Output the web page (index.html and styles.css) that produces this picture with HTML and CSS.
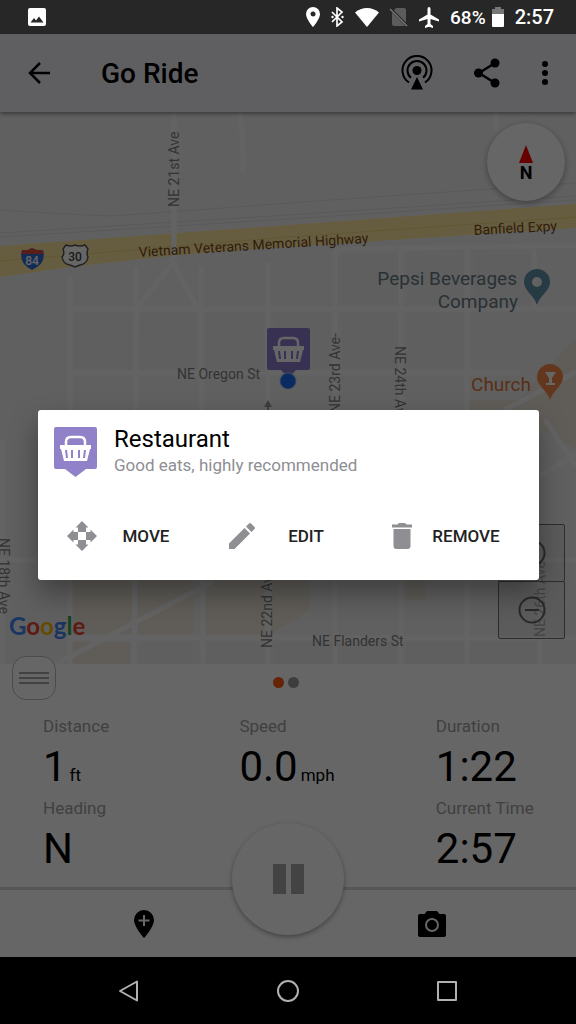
FILE: index.html
```html
<!DOCTYPE html>
<html lang="en">
<head>
    <meta charset="UTF-8">
    <meta name="viewport" content="width=device-width, initial-scale=1.0">
    <title>Go Ride</title>
    <link rel="stylesheet" href="styles.css">
</head>
<body>
    <header class="status-bar">
        <svg width="18" height="18" viewBox="0 0 18 18"><rect width="18" height="18" rx="2" fill="#fff"/><path d="M2.500 14.500l3.500-4.500 2 2.500 3-4 4.500 6z" fill="#272727"/></svg>
        <div class="status-icons">
            <svg width="14" height="20" viewBox="0 0 14 20"><path fill="#fff" fill-rule="evenodd" d="M7 0a7 7 0 0 0-7 7c0 5 7 13 7 13s7-8 7-13a7 7 0 0 0-7-7zm0 4.500a2.500 2.500 0 1 1 0 5 2.500 2.500 0 0 1 0-5z"/></svg>
            <svg width="13" height="20" viewBox="0 0 13 20"><path d="M1 5l10 10-5 4V1l5 4L1 15" fill="none" stroke="#fff" stroke-width="1.700"/><circle cx="1.500" cy="10" r="1.200" fill="#fff"/><circle cx="11.500" cy="10" r="1.200" fill="#fff"/></svg>
            <svg width="24" height="19" viewBox="0 0 24 19"><path fill="#fff" d="M0 4.500C3.500 1.500 7.500 0 12 0s8.500 1.500 12 4.500L12 19z"/></svg>
            <svg width="18" height="20" viewBox="0 0 18 20"><path fill="#5c5c5c" d="M6 1h8q2 0 2 2v14q0 2-2 2H4q-2 0-2-2V5z"/><path d="M0 1.500l18 18" stroke="#272727" stroke-width="3"/><path d="M0 2l17 17" stroke="#777" stroke-width="1.500"/></svg>
            <svg width="20" height="21" viewBox="0 0 20 21"><path fill="#fff" d="M10 0q1.500 0 1.500 2v5.500l8.500 5v2l-8.500-2.500v5l2.500 2V21l-4-1.200L6 21v-2l2.500-2v-5L0 14.500v-2l8.500-5V2Q8.500 0 10 0z"/></svg>
            <span class="battery-level">68%</span>
            <svg width="12" height="20" viewBox="0 0 12 20"><path fill="#777" d="M3 0h6v2h3v6H0V2h3z"/><path fill="#fff" d="M0 7h12v12q0 1-1 1H1q-1 0-1-1z"/></svg>
            <span class="clock">2:57</span>
        </div>
    </header>

    <main class="app">
        <div class="app-bar">
            <button class="icon-btn" aria-label="Back">
                <svg width="24" height="24" viewBox="0 0 24 24"><path d="M24 12H4M14 2L4 12l10 10" fill="none" stroke="#000" stroke-width="2.500"/></svg>
            </button>
            <h1>Go Ride</h1>
            <button class="icon-btn" aria-label="Live tracking">
                <svg width="32" height="36" viewBox="0 0 32 36"><g fill="none" stroke="#000" stroke-width="2"><path d="M8 27.500a14.500 14.500 0 1 1 16 0"/><path d="M10 22.800a9.500 9.500 0 1 1 12 0"/></g><circle cx="16" cy="15.500" r="4.500"/><path d="M16 22l6 12.500H10z"/></svg>
            </button>
            <button class="icon-btn" aria-label="Share">
                <svg width="28" height="30" viewBox="0 0 28 30"><path d="M22 5L6 15l16 10" fill="none" stroke="#000" stroke-width="2.500"/><circle cx="22" cy="5" r="4.500"/><circle cx="5.500" cy="15" r="4.500"/><circle cx="22" cy="25" r="4.500"/></svg>
            </button>
            <button class="icon-btn" aria-label="More options">
                <svg width="8" height="26" viewBox="0 0 8 26"><circle cx="4" cy="4" r="3"/><circle cx="4" cy="13" r="3"/><circle cx="4" cy="22" r="3"/></svg>
            </button>
        </div>

        <section class="map">
            <svg class="map-canvas" viewBox="0 112 576 552" preserveAspectRatio="xMidYMid slice">
                <!-- land -->
                <rect y="112" width="576" height="552" fill="#f1f1f1"/>
                <g fill="#eeeeee">
                    <path d="M74 313h59v56H74zM140 313h57v56h-57zM206 313h58v56h-58zM274 313h56v56h-56zM342 255h56v50h-56zM342 313h56v56h-56zM408 255h56v50h-56zM408 313h56v56h-56zM474 255h56v50h-56z"/>
                    <path d="M140 642h52v22h-52zM200 642h64v22h-64zM274 642h123v22H274zM405 642h132v22H405z"/>
                </g>
                <g fill="#f1e9dc">
                    <path d="M568 345l8-5v110l-66-40zM72 642h58v22H72zM72 570h60v64H72zM138 570h55v64h-55zM200 570h64v64h-64zM272 570h38v40l-38 24zM405 570h20v30h-20zM470 400h60v40h-60z"/>
                </g>
                <!-- railways -->
                <g fill="none" stroke="#dedede" stroke-width="1">
                    <path d="M0 210q60 4 110 6 90-6 178-13l288-20M0 233l288-18 288-19M0 237l288-18 288-19"/>
                </g>
                <!-- streets -->
                <g fill="none" stroke="#f8f8f8" stroke-width="5">
                    <path d="M240 112q4 30 3 60M496 112v20M70 275v389M136 266v43l-2 355M201 266l2 400M268 262v402M335 250v414M401 250v414M467 250v414M534 250v60M540 560v104M2 440v224"/>
                    <path d="M72 309h504M70 373h450M0 560h576M70 638h506M335 250q60-3 241-4M54 665l160-84M505 410l71-38M545 420l31 46M540 475l36-20"/>
                </g>
                <!-- highway -->
                <path d="M0 246q140-10 288-21l288-21v24l-288 19q-150 9-288 30z" fill="#ffe9a0"/>
                <path d="M0 261l288-24 288-20" stroke="#f3d77e" fill="none"/>
                <path d="M174 112v150l-36 44M170 258l28 50" fill="none" stroke="#f8f8f8" stroke-width="5"/>
                <!-- street names -->
                <g class="street">
                    <text transform="translate(179 207) rotate(-90)">NE 21st Ave</text>
                    <text x="177" y="379">NE Oregon St</text>
                    <text transform="translate(340 413) rotate(-90)">NE 23rd Ave-</text>
                    <text transform="translate(395 346) rotate(90)">NE 24th Ave</text>
                    <text transform="translate(-1 538) rotate(90)">NE 18th Ave</text>
                    <text transform="translate(272 648) rotate(-90)">NE 22nd Ave</text>
                    <text class="faint" transform="translate(545 637) rotate(-90)">NE 26th Ave</text>
                    <text x="312" y="646">NE Flanders St</text>
                </g>
                <g class="road-name">
                    <text transform="translate(139 257) rotate(-3.500)">Vietnam Veterans Memorial Highway</text>
                    <text transform="translate(474 235) rotate(-3)">Banfield Expy</text>
                </g>
                <!-- route shields -->
                <path d="M22 250q6 1 10-2 5 3 11 2 4 13-11 20-14-7-10-20z" fill="#2f6fd6"/>
                <path d="M22 250q6 1 10-2 5 3 11 2v4H22z" fill="#e04a3c"/>
                <text class="shield" x="32" y="265" fill="#fff">84</text>
                <path d="M66 245q5 2 9 0 5 2 10 0l3 4q-2 5 0 8-1 7-8 8l-5 2-5-2q-7-1-8-8 3-3 1-8z" fill="#fff" stroke="#555" stroke-width="1.500"/>
                <text class="shield" x="75" y="261" fill="#444">30</text>
                <!-- places -->
                <g class="place" text-anchor="end">
                    <text x="517" y="285">Pepsi Beverages</text>
                    <text x="518" y="308">Company</text>
                    <text class="church" x="531" y="391">Church</text>
                </g>
                <path fill="#5f93a8" fill-rule="evenodd" d="M537 269a13 13 0 0 0-13 13c0 9 10 13 13 23 3-10 13-14 13-23a13 13 0 0 0-13-13zm0 8a5 5 0 1 1 0 10 5 5 0 0 1 0-10z"/>
                <path fill="#f58a4b" d="M550 364a13 13 0 0 0-13 13c0 9 10 13 13 23 3-10 13-14 13-23a13 13 0 0 0-13-13z"/>
                <path fill="#fff" d="M545 372h11l-4 6v5h3v2h-9v-2h3v-5z"/>
                <path d="M268 400l4 7h-3v6h-2v-6h-3z" fill="#999"/>
                <!-- saved place and current position -->
                <g transform="translate(267 328)">
                    <path d="M2 0h39q2 0 2 2v38q0 2-2 2H29l-7.500 8L14 42H2q-2 0-2-2V2q0-2 2-2z" fill="#8e7ccb"/>
                    <path d="M12 18v-3q0-5 5-5h9q5 0 5 5v3" fill="none" stroke="#fff" stroke-width="2.500"/>
                    <path fill="#fff" fill-rule="evenodd" d="M6 18h31v4h-1l-3 12H10L7 22H6zM11 23l1 8h2l-1-8zM17 23v8h2v-8zM24 23v8h2v-8zM30 23l-1 8h2l1-8z"/>
                </g>
                <circle cx="288" cy="381" r="8.500" fill="#9dbdf5"/>
                <circle cx="288" cy="381" r="7.500" fill="#1a6cf0"/>
                <text class="google" x="9" y="635"><tspan fill="#4285f4">G</tspan><tspan fill="#ea4335">o</tspan><tspan fill="#fbbc05">o</tspan><tspan fill="#4285f4">g</tspan><tspan fill="#34a853">l</tspan><tspan fill="#ea4335">e</tspan></text>
            </svg>
            <button class="compass" aria-label="Compass">
                <svg width="14" height="18" viewBox="0 0 14 18"><path d="M7 0l7 18H0z" fill="#f00"/></svg>
                <span>N</span>
            </button>
            <div class="zoom-controls">
                <button aria-label="Zoom in"><svg width="28" height="28" viewBox="0 0 28 28"><circle cx="14" cy="14" r="12.500"/><path d="M7 14h14M14 7v14"/></svg></button>
                <button aria-label="Zoom out"><svg width="28" height="28" viewBox="0 0 28 28"><circle cx="14" cy="14" r="12.500"/><path d="M7 14h14"/></svg></button>
            </div>
            <button class="drawer-btn" aria-label="Map options">
                <svg width="30" height="14" viewBox="0 0 30 14"><path d="M0 2h30M0 7h30M0 12h30" stroke="#888" stroke-width="1.500"/></svg>
            </button>
        </section>

        <section class="panel">
            <div class="pager"><span class="dot active"></span><span class="dot"></span></div>
            <dl class="stats">
                <div><dt>Distance</dt><dd>1<small>ft</small></dd></div>
                <div><dt>Speed</dt><dd>0.0<small>mph</small></dd></div>
                <div><dt>Duration</dt><dd>1:22</dd></div>
                <div><dt>Heading</dt><dd>N</dd></div>
                <div class="last"><dt>Current Time</dt><dd>2:57</dd></div>
            </dl>
        </section>

        <div class="toolbar">
            <button class="icon-btn" aria-label="Add place">
                <svg width="20" height="28" viewBox="0 0 20 28"><path d="M10 0A10 10 0 0 0 0 10c0 7 10 18 10 18s10-11 10-18A10 10 0 0 0 10 0z"/><path d="M10 5v11M4.500 10.500h11" stroke="#fff" stroke-width="2"/></svg>
            </button>
            <button class="icon-btn" aria-label="Take photo">
                <svg width="28" height="26" viewBox="0 0 28 26"><path d="M9 0h10l2.500 3H26q2 0 2 2v19q0 2-2 2H2q-2 0-2-2V5q0-2 2-2h4.500z"/><circle cx="14" cy="14" r="6" fill="none" stroke="#fff" stroke-width="2"/></svg>
            </button>
            <button class="pause-btn" aria-label="Pause">
                <svg width="32" height="30" viewBox="0 0 32 30"><path d="M1 0h13v30H1zM19 0h13v30H19z" fill="#a8a8a8"/></svg>
            </button>
        </div>

        <div class="scrim">
            <div class="dialog" role="dialog" aria-labelledby="place-name">
                <div class="dialog-head">
                    <svg width="43" height="50" viewBox="0 0 43 50">
                        <path d="M2 0h39q2 0 2 2v38q0 2-2 2H32l-10.500 8L11 42H2q-2 0-2-2V2q0-2 2-2z" fill="#9181c9"/>
                        <path d="M12 18v-3q0-5 5-5h9q5 0 5 5v3" fill="none" stroke="#fff" stroke-width="2.500"/>
                        <path fill="#fff" fill-rule="evenodd" d="M6 18h31v4h-1l-3 12H10L7 22H6zM11 23l1 8h2l-1-8zM17 23v8h2v-8zM24 23v8h2v-8zM30 23l-1 8h2l1-8z"/>
                    </svg>
                    <div>
                        <h2 id="place-name">Restaurant</h2>
                        <p>Good eats, highly recommended</p>
                    </div>
                </div>
                <div class="dialog-actions">
                    <button>
                        <svg width="32" height="32" viewBox="0 0 32 32"><path d="M16 1l6.500 6.500H20V12h-8V7.500H9.500zM16 31l-6.500-6.500H12V20h8v4.500h2.500zM1 16l6.500-6.500V12H12v8H7.500v2.500zM31 16l-6.500 6.500V20H20v-8h4.500V9.500z"/><path d="M12 12h8v8h-8z" fill="#fff"/></svg>
                        <span>MOVE</span>
                    </button>
                    <button>
                        <svg width="26" height="26" viewBox="0 0 26 26"><path d="M0 20.500L15.500 5l5.500 5.500L5.500 26H0zM17 3.500L20 .5q1-1 2 0L25.500 4q1 1 0 2l-3 3z"/></svg>
                        <span>EDIT</span>
                    </button>
                    <button>
                        <svg width="20" height="26" viewBox="0 0 20 26"><path d="M0 1.500h5.500L7 0h6l1.500 1.500H20v3H0zM1.500 6h17v17q0 3-3 3h-11q-3 0-3-3z"/></svg>
                        <span>REMOVE</span>
                    </button>
                </div>
            </div>
        </div>
    </main>

    <nav class="nav-bar">
        <button class="icon-btn" aria-label="Back"><svg width="22" height="22" viewBox="0 0 22 22"><path d="M19 1.500v19L2 11z"/></svg></button>
        <button class="icon-btn" aria-label="Home"><svg width="22" height="22" viewBox="0 0 22 22"><circle cx="11" cy="11" r="10"/></svg></button>
        <button class="icon-btn" aria-label="Recent apps"><svg width="22" height="22" viewBox="0 0 22 22"><rect x="2" y="2" width="18" height="18"/></svg></button>
    </nav>
</body>
</html>
```

FILE: styles.css
```css
* {
    box-sizing: border-box;
}
body {
    margin: 0;
    min-height: 100vh;
    display: flex;
    flex-direction: column;
    font-family: Roboto, sans-serif;
    background: #000;
    color: #000;
}
h1, h2, p, dl, dd {
    margin: 0;
}
svg {
    display: block;
    flex: none;
}
button {
    font: inherit;
    color: inherit;
    padding: 0;
    border: none;
    background: none;
    cursor: pointer;
}

/* status bar */
.status-bar {
    height: 34px;
    padding: 0 22px 0 28px;
    display: flex;
    align-items: center;
    justify-content: space-between;
    background: #272727;
    color: #fff;
    font-weight: 500;
}
.status-icons {
    display: flex;
    align-items: center;
    gap: 11px;
}
.battery-level {
    font-size: 19px;
    margin-right: -5px;
}
.clock {
    font-size: 20px;
}

/* app */
.app {
    position: relative;
    flex: 1;
    display: flex;
    flex-direction: column;
    background: #fff;
}
.app-bar {
    position: relative;
    z-index: 1;
    height: 78px;
    padding: 0 27px 0 26px;
    display: flex;
    align-items: center;
    background: #eeeef4;
    box-shadow: 0 2px 4px rgba(0,0,0,0.4);
}
.app-bar h1 {
    flex: 1;
    margin-left: 51px;
    font-size: 28px;
    font-weight: 500;
}
.app-bar .icon-btn + .icon-btn {
    margin-left: 40px;
}
.icon-btn {
    display: flex;
    align-items: center;
    justify-content: center;
}

/* map */
.map {
    position: relative;
    flex: 1;
}
.map-canvas {
    position: absolute;
    width: 100%;
    height: 100%;
}
.street {
    font-size: 14px;
    fill: #808080;
}
.faint {
    fill: #b0b0b0;
}
.road-name {
    font-size: 14px;
    fill: #7a4a20;
}
.shield {
    font-size: 12px;
    font-weight: 500;
    text-anchor: middle;
}
.place {
    font-size: 19px;
    fill: #667a85;
}
.church {
    fill: #e0763c;
}
.google {
    font-family: Lato, sans-serif;
    font-size: 24px;
    font-weight: 700;
}
.compass {
    position: absolute;
    top: 11px;
    right: 11px;
    width: 78px;
    height: 78px;
    padding-top: 4px;
    border-radius: 50%;
    background: #fff;
    box-shadow: 0 2px 6px rgba(0,0,0,0.35);
    display: flex;
    flex-direction: column;
    align-items: center;
    justify-content: center;
    font-size: 18px;
    line-height: 20px;
    font-weight: 700;
}
.zoom-controls {
    position: absolute;
    right: 11px;
    bottom: 25px;
    width: 67px;
}
.zoom-controls button {
    width: 100%;
    height: 58px;
    display: flex;
    align-items: center;
    justify-content: center;
    border: 1px solid #707070;
    border-radius: 2px;
    background: rgba(0,0,0,0.05);
}
.zoom-controls button + button {
    margin-top: -1px;
}
.zoom-controls svg {
    fill: none;
    stroke: #666;
    stroke-width: 2;
}
.drawer-btn {
    position: absolute;
    left: 12px;
    bottom: -36px;
    z-index: 1;
    width: 44px;
    height: 44px;
    display: flex;
    align-items: center;
    justify-content: center;
    border: 1px solid #bbb;
    border-radius: 14px;
    background: #fff;
}

/* stats */
.panel {
    padding-bottom: 9px;
}
.pager {
    height: 36px;
    margin-bottom: 14px;
    display: flex;
    align-items: center;
    justify-content: center;
}
.dot {
    width: 11px;
    height: 11px;
    margin-right: 4px;
    border-radius: 50%;
    background: #999;
}
.dot.active {
    background: #ff5a10;
}
.stats {
    display: grid;
    grid-template-columns: 2fr 2fr 1fr;
    padding: 0 42px 0 43px;
    white-space: nowrap;
}
.stats .last {
    grid-column: 3;
}
.stats dt {
    font-size: 17px;
    line-height: 24px;
    color: #a0a0a0;
}
.stats dd {
    font-size: 42px;
    line-height: 58px;
}
.stats small {
    font-size: 17px;
    line-height: 1;
    margin-left: 3px;
}
.toolbar {
    position: relative;
    height: 70px;
    display: flex;
    align-items: center;
    justify-content: space-around;
    border-top: 3px solid #d8d8d8;
}
.toolbar .icon-btn {
    flex: 1;
}
.pause-btn {
    position: absolute;
    left: 50%;
    bottom: 22px;
    width: 112px;
    height: 112px;
    margin-left: -56px;
    display: flex;
    align-items: center;
    justify-content: center;
    border-radius: 50%;
    background: #fff;
    box-shadow: 0 2px 5px rgba(0,0,0,0.35);
}

/* dialog */
.scrim {
    position: absolute;
    inset: 0;
    z-index: 2;
    padding: 0 37px 2px 38px;
    display: flex;
    align-items: center;
    background: rgba(0,0,0,0.6);
}
.dialog {
    width: 100%;
    padding: 16px;
    background: #fff;
    border-radius: 3px;
    box-shadow: 0 14px 28px rgba(0,0,0,0.35);
}
.dialog-head {
    display: flex;
    align-items: center;
    gap: 17px;
}
.dialog-head h2 {
    font-size: 24px;
    line-height: 26px;
    font-weight: 400;
}
.dialog-head p {
    font-size: 17px;
    line-height: 26px;
    color: #8e8e93;
}
.dialog-actions {
    display: grid;
    grid-template-columns: repeat(3, 1fr);
    gap: 32px;
    margin-top: 30px;
    padding: 0 13px 0 8px;
}
.dialog-actions button {
    height: 56px;
    display: grid;
    grid-template-columns: 40px 1fr;
    align-items: center;
    justify-items: center;
    font-size: 17px;
    font-weight: 500;
    color: #222;
}
.dialog-actions svg {
    fill: #8e8e93;
}

/* system navigation */
.nav-bar {
    height: 67px;
    padding: 0 49px;
    display: flex;
    align-items: center;
    justify-content: space-around;
}
.nav-bar svg {
    fill: none;
    stroke: #b0b0b0;
    stroke-width: 2;
    stroke-linejoin: round;
}
```
